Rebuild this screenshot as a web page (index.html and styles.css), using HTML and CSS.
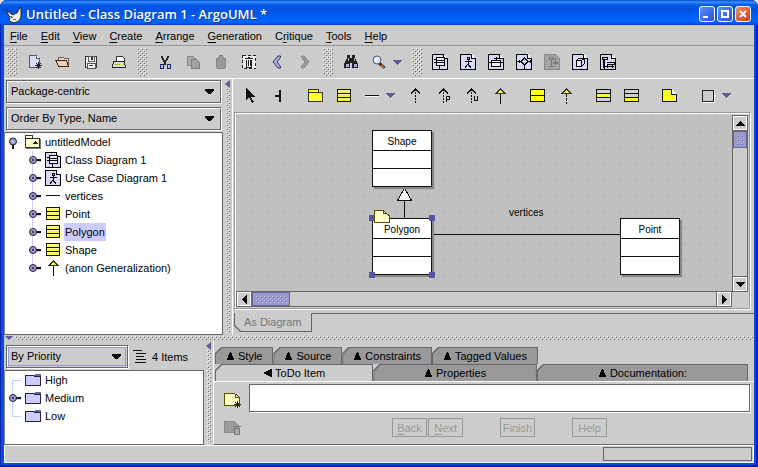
FILE: index.html
```html
<!DOCTYPE html>
<html lang="en">
<head>
<meta charset="utf-8">
<title>Untitled - Class Diagram 1 - ArgoUML *</title>
<link rel="stylesheet" href="styles.css">
</head>
<body>
<svg class="defs" aria-hidden="true">
  <symbol id="page" viewBox="0 0 16 16"><path d="M.5.5h11l4 4v11H.5z" fill="#d8d8f8" stroke="#000"/><path d="M11.500.5v4h4" fill="#fff" stroke="#000"/></symbol>
  <symbol id="class-diagram" viewBox="0 0 16 16"><use href="#page"/><path d="M4.500 3.500h8v8h-8z" fill="#eef"/><path d="M4.500 3.500h8v8h-8zM4.500 6.500h8M4.500 8.500h8M2 5.500h3M2 8.500h3M7.500 11.500v3" fill="none" stroke="#000"/></symbol>
  <symbol id="usecase-diagram" viewBox="0 0 16 16"><use href="#page"/><path d="M7 3.500h2v2H7zM8 5v5M4.500 7.500h7M8 10l-3 4M8 10l3 4" fill="none" stroke="#000"/></symbol>
  <symbol id="state-diagram" viewBox="0 0 16 16"><use href="#page"/><path d="M3.500 6.500h9v6h-9z" fill="#eef"/><path d="M3.500 6.500h9v6h-9zM3 8.500h9M8.500 6V2.500M6 4.500h5M1 8.500h3M12 8.500h3" fill="none" stroke="#000"/></symbol>
  <symbol id="activity-diagram" viewBox="0 0 16 16"><use href="#page"/><path d="M8.500 4l3.500 3.500L8.500 11 5 7.500zM1 7.500h4M12 7.500h4M8.500 11v4M3 6v3M14 6v3" fill="none" stroke="#000"/></symbol>
  <symbol id="sequence-diagram" viewBox="0 0 16 16"><path d="M.5.5h11l4 4v11H.5z" fill="#a4a4a4" stroke="#888"/><path d="M5.500 3.500h4v2h-4zM7.500 6v6M5 12.500h5M11.500 4v6M9.500 8l2 2 2-2M9 9.500h5" fill="none" stroke="#777"/></symbol>
  <symbol id="deploy-diagram" viewBox="0 0 16 16"><use href="#page"/><path d="M4.500 6.500h5v6h-5zM4.500 6.500l2-2h6l-3 2M12.500 4.500v5l-3 3" fill="#e8e8ff" stroke="#000"/></symbol>
  <symbol id="collab-diagram" viewBox="0 0 16 16"><use href="#page"/><path d="M2.500 3.500h5v2h-5zM4.500 6v8.500M3.500 6v8M6.500 8.500h8v2h-8M7.500 10v4M12.500 10v4M5 12.500h9" fill="none" stroke="#000"/></symbol>
  <symbol id="new" viewBox="0 0 16 16"><path d="M2.500 1.500h7l3 3v9h-10z" fill="#d8dcfa" stroke="#557"/><path d="M9.500 1.500v3h3" fill="#fff" stroke="#557"/><path d="M11.500 8v7M8 11.500h7M9 9l5 5M14 9l-5 5" stroke="#222"/></symbol>
  <symbol id="open" viewBox="0 0 16 16"><path d="M3.500 12.500v-9h5l1 1h4v8z" fill="#eed8c8" stroke="#7a5548"/><path d="M1 6.500h10.500l2 6H3.500z" fill="#f0cdb8" stroke="#402018"/></symbol>
  <symbol id="save" viewBox="0 0 16 16"><path d="M2.500 2.500h11v11h-11z" fill="#f2f2f2" stroke="#333"/><path d="M5 2h6v5H5zM4 9h8v5H4z" fill="#fff" stroke="#555"/><path d="M8 3h2v3H8zM6 11h4v1H6z" fill="#333"/></symbol>
  <symbol id="print" viewBox="0 0 16 16"><path d="M5 8l1-6h5l2 2v4" fill="#fff" stroke="#333"/><path d="M2.500 7.500h11l1 6h-13z" fill="#ddd" stroke="#222"/><path d="M3 10h10v1H3z" fill="#a8bb30"/><path d="M9 10h3v1H9z" fill="#f4ef20"/></symbol>
  <symbol id="cut" viewBox="0 0 16 16"><path d="M4 2l5 9M12 2l-5 9M5 2l4 8M11 2l-4 8" stroke="#222" fill="none"/><path d="M3 10h3v4H3zM10 10h3v4h-3z" fill="#bbf" stroke="#226"/></symbol>
  <symbol id="copy" viewBox="0 0 16 16"><path d="M2.500 2.500h6l2 2v7h-8z" fill="#aaa" stroke="#888"/><path d="M6.500 5.500h5l3 3v6h-8z" fill="#a2a2a2" stroke="#808080"/></symbol>
  <symbol id="paste" viewBox="0 0 16 16"><path d="M3.500 4.500h2l1-3h3l1 3h2v9l-1 1h-7l-1-1z" fill="#999" stroke="#858585"/></symbol>
  <symbol id="remove" viewBox="0 0 16 16"><path d="M1.500 1.500h13v13h-13z" fill="#eee" stroke="#222" stroke-dasharray="3 2"/><path d="M4 4.500h8M5.500 6v7h5V6M7 3.500h2M7.500 6v6M9.500 6v6" fill="none" stroke="#222"/></symbol>
  <symbol id="back" viewBox="0 0 16 16"><path class="smooth" d="M9 2h2.500v1.500L8 8l3.500 4.500V14H9L4 8z" fill="#aaaee0" stroke="#33335c"/></symbol>
  <symbol id="forward" viewBox="0 0 16 16"><path class="smooth" d="M4.500 2H7l5 6-5 6H4.500v-1.500L8 8 4.500 3.500z" fill="#999" stroke="#8c8c8c"/></symbol>
  <symbol id="find" viewBox="0 0 16 16"><path d="M4 1h3v3h2V1h3v3l3 6v4H9V9H7v5H1v-4l3-6z" fill="#222"/><path d="M3 10h3v3H3zM11 10h3v3h-3z" fill="#aab0e8"/><path d="M5 4v3M11 4v3" stroke="#aaa"/></symbol>
  <symbol id="zoom" viewBox="0 0 16 16"><path class="smooth" d="M8 9l5.500 5" stroke="#222" stroke-width="3"/><path class="smooth" d="M10 11l3 3" stroke="#c07828" stroke-width="2"/><circle cx="6" cy="6" r="4" fill="#dfe6ff" stroke="#55557c"/><path d="M4 6l2-2" stroke="#fff"/></symbol>
  <symbol id="drop" viewBox="0 0 9 5"><path d="M0 0h9L5 4.500H4z" fill="#5c5c99"/></symbol>
  <symbol id="model" viewBox="0 0 16 16"><path d="M.5 4.500v-3h7v3h7v9H.5z" fill="#ffc" stroke="#333"/><path d="M.5 4.500h8M8 9.500h5M9 8.500h3M10.500 7v2" fill="none" stroke="#222"/><path d="M1 14.500h14.500V5" fill="none" stroke="#777"/></symbol>
  <symbol id="class" viewBox="0 0 16 16"><path d="M1 2h14v12H1z" fill="#ff3"/><path d="M1.500 1.500h13v12h-13zM1 5.500h13M1 9.500h13" fill="none" stroke="#111"/><path d="M2 2.500h12M2 6.500h12M2 10.500h12" stroke="#fff8a0"/></symbol>
  <symbol id="assoc" viewBox="0 0 16 16"><path d="M1 8.500h14" stroke="#fff"/><path d="M1 7.500h14" stroke="#111"/></symbol>
  <symbol id="general" viewBox="0 0 16 16"><path d="M8.500 6v10" stroke="#111"/><path d="M4 5.500L8.500 1 13 5.500z" fill="#ff3" stroke="#332"/></symbol>
  <symbol id="realize" viewBox="0 0 16 16"><path d="M8.500 6v10" stroke="#111" stroke-dasharray="3 1"/><path d="M4 5.500L8.500 1 13 5.500z" fill="#ff3" stroke="#332"/></symbol>
  <symbol id="depend" viewBox="0 0 16 16"><path d="M7.500 1v15" stroke="#111" stroke-dasharray="2 1"/><path d="M3 5.500L7.500 1 12 5.500" fill="none" stroke="#111"/></symbol>
  <symbol id="permit" viewBox="0 0 16 16"><use href="#depend"/><path d="M10.500 14V8.500h3v3h-3" fill="none" stroke="#111"/></symbol>
  <symbol id="usage" viewBox="0 0 16 16"><use href="#depend"/><path d="M10.500 8v4.500h3V8" fill="none" stroke="#111"/></symbol>
  <symbol id="pointer" viewBox="0 0 16 16"><path d="M4 0v12l3-3 3 6 2-1-3-5h4z" fill="#111"/></symbol>
  <symbol id="broom" viewBox="0 0 16 16"><path d="M9 2h2v12H9zM5 7h5v2H5z" fill="#111"/></symbol>
  <symbol id="package" viewBox="0 0 16 16"><path d="M.5 4.500v-3h10v3h4v9H.5z" fill="#ff3" stroke="#332"/><path d="M1 4.500h10" stroke="#332"/></symbol>
  <symbol id="interface" viewBox="0 0 16 16"><path d="M.5 1.500h14v12H.5zM1 7.500h13" fill="#ff2" stroke="#111"/></symbol>
  <symbol id="attribute" viewBox="0 0 16 16"><path d="M.5 1.500h14v12H.5z" fill="#d2cfd2" stroke="#111"/><path d="M1 6h13v3H1z" fill="#ff2"/><path d="M1 5.500h13M1 9.500h13" stroke="#111"/></symbol>
  <symbol id="operation" viewBox="0 0 16 16"><path d="M.5 1.500h14v12H.5z" fill="#d2cfd2" stroke="#111"/><path d="M1 10h13v3H1z" fill="#ff2"/><path d="M1 5.500h13M1 9.500h13" stroke="#111"/></symbol>
  <symbol id="note" viewBox="0 0 16 16"><path d="M.5 1.500h9l5 5v7H.5z" fill="#ff2" stroke="#111"/><path d="M9.500 1.500v5h5" fill="#fff" stroke="#111"/></symbol>
  <symbol id="rect" viewBox="0 0 16 16"><path d="M3.500 3.500h11v11h-11z" fill="none" stroke="#fff"/><path d="M2.500 2.500h11v11h-11z" fill="#ccc" stroke="#222"/></symbol>
  <symbol id="closed" viewBox="0 0 16 18"><path d="M9 10.500h7" stroke="#ccf"/><path d="M11 9h5" stroke="#111" stroke-width="2"/><circle cx="8" cy="9" r="3.500" fill="#99c" stroke="#223"/><circle cx="8" cy="9" r="1" fill="#223"/></symbol>
  <symbol id="opened" viewBox="0 0 16 18"><path d="M12 9.500h4" stroke="#ccf"/><path d="M8 11v5" stroke="#111" stroke-width="2"/><circle cx="8" cy="8.500" r="3.500" fill="#99c" stroke="#223"/><circle cx="8" cy="8.500" r="1" fill="#eef"/></symbol>
  <symbol id="branch" viewBox="0 0 16 18"><path d="M7 9.500h9" stroke="#ccf"/></symbol>
  <symbol id="folder" viewBox="0 0 16 16"><path d="M9 4l1-2h5.500v3H9z" fill="#669"/><path d="M.5 3.500h8l1 1h6v9H.5z" fill="#ccf" stroke="#223"/></symbol>
  <symbol id="todo-new" viewBox="0 0 18 16"><path d="M.5 1.500h10l5 4v8H.5z" fill="#ffffc4" stroke="#550"/><path d="M11.500 2.500v3h4" fill="#fff" stroke="#550"/><path d="M13.500 9v7M10 12.500h7M11 10l5 5M16 10l-5 5" stroke="#222"/></symbol>
  <symbol id="todo-done" viewBox="0 0 18 16"><path d="M.5 1.500h10l4 4v7H.5z" fill="#9c9c9c" stroke="#8a8a8a"/><path d="M9 6.500h8M10.500 8v6h5V8z" fill="#aaa" stroke="#777"/></symbol>
  <symbol id="up" viewBox="0 0 9 9"><path d="M0 9h9L5 0H4z"/></symbol>
  <symbol id="left" viewBox="0 0 9 9"><path d="M9 0v9L0 5V4z"/></symbol>
</svg>

<div class="window">
  <header class="titlebar">
    <svg class="app-icon" viewBox="0 0 18 18" aria-hidden="true"><path class="smooth" d="M1 4l4 3 3 2 3-2 5-6v10l-2 4-5 2-5-2 1-3z" fill="#f4f4e8" stroke="#222"/><path d="M5 10l3 2M11 8l3-3M8 13h3" stroke="#666"/></svg>
    <h1>Untitled - Class Diagram 1 - ArgoUML *</h1>
    <button class="win-btn" aria-label="Minimize"><svg viewBox="0 0 14 14"><path d="M3 9h5v2H3z" fill="#fff"/></svg></button>
    <button class="win-btn" aria-label="Maximize"><svg viewBox="0 0 14 14"><path d="M4 4h6v6H4z" fill="none" stroke="#fff" stroke-width="2"/></svg></button>
    <button class="win-btn close" aria-label="Close"><svg viewBox="0 0 14 14"><path class="smooth" d="M4 4l6 6M10 4l-6 6" stroke="#fff" stroke-width="2"/></svg></button>
  </header>

  <nav class="menubar">
    <button><u>F</u>ile</button><button><u>E</u>dit</button><button><u>V</u>iew</button><button><u>C</u>reate</button><button><u>A</u>rrange</button><button><u>G</u>eneration</button><button>C<u>r</u>itique</button><button><u>T</u>ools</button><button><u>H</u>elp</button>
  </nav>

  <div class="toolbar">
    <div class="group"><i class="grip"></i>
      <button class="tool" aria-label="New"><svg><use href="#new"/></svg></button>
      <button class="tool" aria-label="Open"><svg><use href="#open"/></svg></button>
      <button class="tool" aria-label="Save"><svg><use href="#save"/></svg></button>
      <button class="tool" aria-label="Print"><svg><use href="#print"/></svg></button>
    </div>
    <div class="group"><i class="grip"></i>
      <button class="tool" aria-label="Cut"><svg><use href="#cut"/></svg></button>
      <button class="tool" aria-label="Copy" disabled><svg><use href="#copy"/></svg></button>
      <button class="tool" aria-label="Paste" disabled><svg><use href="#paste"/></svg></button>
      <button class="tool" aria-label="Remove"><svg><use href="#remove"/></svg></button>
      <button class="tool" aria-label="Back"><svg><use href="#back"/></svg></button>
      <button class="tool" aria-label="Forward" disabled><svg><use href="#forward"/></svg></button>
    </div>
    <div class="group"><i class="grip"></i>
      <button class="tool" aria-label="Find"><svg><use href="#find"/></svg></button>
      <button class="tool" aria-label="Zoom"><svg><use href="#zoom"/></svg></button>
      <button class="drop" aria-label="Zoom levels"><svg><use href="#drop"/></svg></button>
    </div>
    <div class="group"><i class="grip"></i>
      <button class="tool" aria-label="Class diagram"><svg><use href="#class-diagram"/></svg></button>
      <button class="tool" aria-label="Use case diagram"><svg><use href="#usecase-diagram"/></svg></button>
      <button class="tool" aria-label="State diagram"><svg><use href="#state-diagram"/></svg></button>
      <button class="tool" aria-label="Activity diagram"><svg><use href="#activity-diagram"/></svg></button>
      <button class="tool" aria-label="Sequence diagram" disabled><svg><use href="#sequence-diagram"/></svg></button>
      <button class="tool" aria-label="Deployment diagram"><svg><use href="#deploy-diagram"/></svg></button>
      <button class="tool" aria-label="Collaboration diagram"><svg><use href="#collab-diagram"/></svg></button>
    </div>
  </div>

  <main class="upper">
    <section class="explorer">
      <div class="combo"><select aria-label="Perspective"><option>Package-centric</option></select><svg><use href="#drop"/></svg></div>
      <div class="combo"><select aria-label="Order"><option>Order By Type, Name</option></select><svg><use href="#drop"/></svg></div>
      <div class="tree">
        <div class="row"><svg class="knob"><use href="#opened"/></svg><svg class="ico"><use href="#model"/></svg><span>untitledModel</span></div>
        <ul class="children">
          <li class="row"><svg class="knob"><use href="#closed"/></svg><svg class="ico"><use href="#class-diagram"/></svg><span>Class Diagram 1</span></li>
          <li class="row"><svg class="knob"><use href="#closed"/></svg><svg class="ico"><use href="#usecase-diagram"/></svg><span>Use Case Diagram 1</span></li>
          <li class="row"><svg class="knob"><use href="#closed"/></svg><svg class="ico"><use href="#assoc"/></svg><span>vertices</span></li>
          <li class="row"><svg class="knob"><use href="#closed"/></svg><svg class="ico"><use href="#class"/></svg><span>Point</span></li>
          <li class="row"><svg class="knob"><use href="#closed"/></svg><svg class="ico"><use href="#class"/></svg><span class="selected">Polygon</span></li>
          <li class="row"><svg class="knob"><use href="#closed"/></svg><svg class="ico"><use href="#class"/></svg><span>Shape</span></li>
          <li class="row"><svg class="knob"><use href="#closed"/></svg><svg class="ico"><use href="#general"/></svg><span>(anon Generalization)</span></li>
        </ul>
      </div>
    </section>
    <div class="splitter vertical"></div>
    <section class="editor">
      <div class="palette">
        <button class="tool" aria-label="Select"><svg><use href="#pointer"/></svg></button>
        <button class="tool" aria-label="Broom"><svg><use href="#broom"/></svg></button>
        <button class="tool apart" aria-label="Package"><svg><use href="#package"/></svg></button>
        <button class="tool" aria-label="Class"><svg><use href="#class"/></svg></button>
        <button class="tool" aria-label="Association"><svg><use href="#assoc"/></svg></button>
        <button class="drop" aria-label="Associations"><svg><use href="#drop"/></svg></button>
        <button class="tool" aria-label="Dependency"><svg><use href="#depend"/></svg></button>
        <button class="tool" aria-label="Permission"><svg><use href="#permit"/></svg></button>
        <button class="tool" aria-label="Usage"><svg><use href="#usage"/></svg></button>
        <button class="tool" aria-label="Generalization"><svg><use href="#general"/></svg></button>
        <button class="tool apart" aria-label="Interface"><svg><use href="#interface"/></svg></button>
        <button class="tool" aria-label="Realization"><svg><use href="#realize"/></svg></button>
        <button class="tool apart" aria-label="Attribute"><svg><use href="#attribute"/></svg></button>
        <button class="tool" aria-label="Operation"><svg><use href="#operation"/></svg></button>
        <button class="tool apart" aria-label="Note"><svg><use href="#note"/></svg></button>
        <button class="tool apart" aria-label="Rectangle"><svg><use href="#rect"/></svg></button>
        <button class="drop" aria-label="Shapes"><svg><use href="#drop"/></svg></button>
      </div>
      <div class="scrollpane">
        <div class="canvas">
          <svg class="edges" aria-hidden="true"><path d="M168.500 85v18M195 119.500h190" stroke="#111"/><path d="M161.500 85.500h14L168.500 73z" fill="#fff" stroke="#111"/></svg>
          <div class="node shape"><b>Shape</b><i></i><i></i></div>
          <div class="node polygon"><b>Polygon</b><i></i><i></i><s></s><s></s><s></s><s></s><svg class="clip" viewBox="0 0 17 13"><path d="M1 .5h9l6 5v7H1z" fill="#ffffd0" stroke="#550"/><path d="M10 .5v3h4" fill="none" stroke="#550"/></svg></div>
          <div class="node point"><b>Point</b><i></i><i></i></div>
          <span class="edge-label">vertices</span>
        </div>
        <div class="scroll v"><button aria-label="Scroll up"><svg viewBox="0 0 9 5"><path d="M0 5h9L5 0H4z"/></svg></button><i class="thumb"></i><button aria-label="Scroll down"><svg viewBox="0 0 9 5"><path d="M0 0h9L5 5H4z"/></svg></button></div>
        <div class="scroll h"><button aria-label="Scroll left"><svg viewBox="0 0 5 9"><path d="M5 0v9L0 5V4z"/></svg></button><i class="thumb"></i><button aria-label="Scroll right"><svg viewBox="0 0 5 9"><path d="M0 0v9l5-4V4z"/></svg></button></div>
      </div>
      <div class="foot"><button class="foot-tab" disabled>As Diagram</button></div>
    </section>
  </main>

  <div class="splitter horizontal"></div>

  <section class="lower">
    <div class="todo">
      <div class="todo-head">
        <div class="combo focus"><select aria-label="Group by"><option>By Priority</option></select><svg><use href="#drop"/></svg></div>
        <svg class="flat" viewBox="0 0 13 13" aria-hidden="true"><path d="M0 .5h9M3 3.500h10M3 6.500h8M3 9.500h10M2 12.500h11" stroke="#111"/></svg>
        <span>4 Items</span>
      </div>
      <ul class="tree priorities">
        <li class="row"><svg class="knob"><use href="#branch"/></svg><svg class="ico"><use href="#folder"/></svg><span>High</span></li>
        <li class="row"><svg class="knob"><use href="#closed"/></svg><svg class="ico"><use href="#folder"/></svg><span>Medium</span></li>
        <li class="row"><svg class="knob"><use href="#branch"/></svg><svg class="ico"><use href="#folder"/></svg><span>Low</span></li>
      </ul>
    </div>
    <div class="splitter vertical"></div>
    <div class="details">
      <div class="tabs back"><button><svg><use href="#up"/></svg>Style</button><button><svg><use href="#up"/></svg>Source</button><button><svg><use href="#up"/></svg>Constraints</button><button><svg><use href="#up"/></svg>Tagged Values</button></div>
      <div class="tabs front"><button class="active"><svg><use href="#left"/></svg>ToDo Item</button><button><svg><use href="#up"/></svg>Properties</button><button><svg><use href="#up"/></svg>Documentation:</button></div>
      <div class="wizard">
        <div class="side">
          <button aria-label="New to do item"><svg><use href="#todo-new"/></svg></button>
          <button aria-label="Resolve item" disabled><svg><use href="#todo-done"/></svg></button>
        </div>
        <div class="step">
          <textarea aria-label="To do description"></textarea>
          <div class="actions"><button disabled><u>B</u>ack</button><button disabled><u>N</u>ext</button><button class="apart" disabled>Finish</button><button class="apart" disabled>Help</button></div>
        </div>
      </div>
    </div>
  </section>

  <footer class="status"><div class="progress"></div></footer>
</div>
</body>
</html>
```
FILE: styles.css
```css
* { box-sizing: border-box; }

:root {
  --face: #cccccc;
  --edge: #666666;
  --shade: #999999;
  --lilac: #ccccff;
  --violet: #9999cc;
  --bumps:
    conic-gradient(at 1px 1px, transparent 270deg, #fff 0) 0 0 / 4px 4px,
    conic-gradient(at 1px 1px, transparent 270deg, #fff 0) 2px 2px / 4px 4px,
    conic-gradient(at 1px 1px, transparent 270deg, #666 0) 1px 1px / 4px 4px,
    conic-gradient(at 1px 1px, transparent 270deg, #666 0) 3px 3px / 4px 4px;
}

body {
  margin: 0;
  background: #e8e8e0;
  color: #000;
  font: 11px/18px "Liberation Sans", Arial, sans-serif;
}

button, select, textarea { font: inherit; color: inherit; }
button { padding: 0; border: 0; background: none; }
ul { margin: 0; padding: 0; list-style: none; }
svg { display: block; flex: none; shape-rendering: crispEdges; }
circle, .smooth { shape-rendering: geometricPrecision; }
.defs { position: absolute; width: 0; height: 0; }

.window {
  display: flex;
  flex-direction: column;
  min-height: 100vh;
  padding: 0 4px 4px;
  border-radius: 7px 7px 0 0;
  background: #0050e0;
  box-shadow: inset 1px 0 #0020b0, inset -2px 0 #0020b0, inset 0 -2px #0020b0;
}

/* Title bar */
.titlebar {
  display: flex;
  align-items: center;
  gap: 2px;
  height: 25px;
  margin: 0 -4px;
  padding: 4px 7px 0 5px;
  border-radius: 7px 7px 0 0;
  background: linear-gradient(#0048d0 0, #3c90ff 2px, #0058e8 5px, #0052e0 10px, #0064ff 20px, #0060f8 23px, #0038b8 25px);
}
.app-icon { width: 18px; height: 18px; }
.titlebar h1 {
  flex: 1;
  margin: 0 0 0 1px;
  color: #fff;
  font: 600 13px/18px "Open Sans", sans-serif;
  text-shadow: 1px 1px #0a3a9c;
  white-space: nowrap;
}
.titlebar h1, .win-btn { margin-bottom: 2px; }
.win-btn {
  width: 16px;
  height: 16px;
  border: 1px solid #fff;
  border-radius: 3px;
  background: linear-gradient(135deg, #5c8cf4, #2058dc);
}
.win-btn.close { background: linear-gradient(135deg, #f08a68, #d43c10); }

/* Menu and toolbars */
.menubar {
  display: flex;
  gap: 13px;
  height: 21px;
  padding: 1px 6px 0;
  border-bottom: 1px solid var(--shade);
  background: var(--face);
}
u { text-underline-offset: 2px; }
.toolbar {
  display: flex;
  gap: 4px;
  height: 33px;
  padding-left: 3px;
  border-bottom: 1px solid #fff;
  background: var(--face);
}
.group, .palette { display: flex; align-items: center; }
.grip {
  width: 10px;
  height: 28px;
  margin-right: 4px;
  background: var(--bumps);
}
.tool { width: 28px; padding: 6px; }
.tool svg { width: 16px; height: 16px; }
.drop { width: 16px; }
.group .drop { width: 15px; }
.drop svg { width: 9px; height: 5px; }

/* Upper half */
.upper {
  flex: 1;
  display: grid;
  grid-template-columns: 219px 9px 1fr;
  background: var(--face);
}
.explorer {
  display: flex;
  flex-direction: column;
  gap: 4px;
  padding-top: 1px;
}
.combo {
  display: grid;
  grid-template-columns: 1fr 16px;
  align-items: center;
  height: 23px;
  margin: 0 2px;
  border: 1px solid var(--edge);
  box-shadow: inset 1px 1px #fff, 1px 1px #fff;
}
.combo select {
  grid-area: 1 / 1 / 2 / 3;
  width: 100%;
  height: 21px;
  padding: 0 20px 1px 4px;
  border: 0;
  background: none;
  appearance: none;
}
.combo svg {
  grid-area: 1 / 2;
  width: 11px;
  height: 6px;
  filter: brightness(0);
  pointer-events: none;
}
.combo.focus { outline: 1px solid var(--violet); outline-offset: -3px; }

.tree {
  flex: 1;
  border: 1px solid var(--edge);
  border-left-color: #888;
  background: #fff;
}
.explorer .tree { margin-top: -2px; }
.row { display: flex; align-items: center; gap: 4px; height: 18px; }
.knob { width: 16px; height: 18px; }
.ico { width: 16px; height: 16px; }
.row span { white-space: nowrap; }
.row .selected { margin: 0 -1px; padding: 0 1px; background: var(--lilac); }
.children {
  padding-left: 20px;
  background: linear-gradient(var(--lilac), var(--lilac)) 27px 0 / 1px 118px no-repeat;
}
.priorities { background: linear-gradient(var(--lilac), var(--lilac)) 7px 9px / 1px 37px no-repeat #fff; }

.splitter { position: relative; background: var(--face); }
.splitter::before { content: ""; position: absolute; background: var(--bumps); }
.splitter::after { content: ""; position: absolute; background: #5c5c99; }
.splitter.vertical::before { inset: 9px 2px 2px 3px; }
.splitter.vertical::after { left: 2px; top: 1px; width: 5px; height: 8px; clip-path: polygon(100% 0, 100% 100%, 0 50%); }
.splitter.horizontal { height: 6px; }
.splitter.horizontal::before { inset: 1px 1px 1px 11px; }
.splitter.horizontal::after { left: 1px; top: 1px; width: 8px; height: 4px; clip-path: polygon(0 0, 100% 0, 50% 100%); }

.editor {
  display: flex;
  flex-direction: column;
  min-width: 0;
  border-left: 1px solid #fff;
}
.palette { height: 33px; padding-left: 3px; }
.apart { margin-left: 10px; }
.scrollpane {
  flex: 1;
  display: grid;
  grid-template: 1fr 16px / 1fr 16px;
  margin: 0 4px 4px 1px;
  border: 1px solid var(--shade);
  box-shadow: inset 1px 1px #fff, 1px 1px #fff;
  padding: 2px 1px 1px;
}
.canvas {
  position: relative;
  overflow: hidden;
  background:
    conic-gradient(at 2px 2px, transparent 270deg, #b2b6b2 0) 0 0 / 16px 16px,
    #c1c0c1;
}
.edges { position: absolute; inset: 0; width: 100%; height: 100%; }
.node {
  position: absolute;
  width: 60px;
  border: 1px solid #111;
  background: #fff;
  box-shadow: 2px 2px 1px #888;
  font-size: 10px;
  text-align: center;
}
.node b { display: block; height: 19px; padding-top: 2px; font-weight: normal; }
.node i { display: block; height: 18px; border-top: 1px solid #111; }
.shape { left: 136px; top: 15px; }
.polygon { left: 136px; top: 103px; }
.point { left: 384px; top: 103px; }
.node s { position: absolute; width: 6px; height: 6px; background: #5555aa; }
.node s:nth-of-type(odd) { left: -4px; }
.node s:nth-of-type(even) { right: -4px; }
.node s:nth-of-type(-n+2) { top: -4px; }
.node s:nth-of-type(n+3) { bottom: -4px; }
.clip { position: absolute; left: 0; top: -9px; width: 17px; height: 13px; }
.edge-label { position: absolute; left: 273px; top: 89px; font-size: 10px; }

.scroll { display: flex; border: 1px solid var(--edge); }
.scroll.v { flex-direction: column; border-width: 1px 1px 0; }
.scroll button {
  display: grid;
  place-items: center;
  width: 14px;
  height: 14px;
  border: 1px solid #fff;
  outline: 1px solid var(--edge);
}
.scroll.v svg { width: 9px; height: 5px; }
.scroll.h svg { width: 5px; height: 9px; }
.scroll button:last-child { margin: auto 0 0; }
.scroll.h button:last-child { margin: 0 0 0 auto; }
.thumb {
  width: 14px;
  height: 17px;
  margin-top: 1px;
  border: 1px solid #666699;
  background:
    conic-gradient(at 1px 1px, transparent 270deg, #ccf 0) 1px 1px / 4px 4px content-box,
    conic-gradient(at 1px 1px, transparent 270deg, #669 0) 2px 2px / 4px 4px content-box,
    conic-gradient(at 1px 1px, transparent 270deg, #ccf 0) 3px 3px / 4px 4px content-box,
    var(--violet);
  padding: 2px;
}
.h .thumb { width: 38px; height: 14px; margin: 0 0 0 1px; }

.foot {
  display: flex;
  height: 22px;
}
.foot::after { content: ""; flex: 1; border-top: 1px solid var(--edge); }
.foot-tab {
  position: relative;
  isolation: isolate;
  height: 19px;
  margin-left: 1px;
  padding: 0 11px 2px 10px;
  color: #777;
  background: var(--edge);
  clip-path: polygon(0 0, 100% 0, 100% 100%, 6px 100%, 0 13px);
}
.foot-tab::before {
  content: "";
  position: absolute;
  z-index: -1;
  inset: 0 1px 1px;
  background: var(--face);
  clip-path: polygon(0 0, 100% 0, 100% 100%, 6px 100%, 0 12px);
}

/* Lower half */
.lower {
  display: grid;
  grid-template-columns: 200px 9px 1fr;
  height: 104px;
  background: var(--face);
}
.todo { display: flex; flex-direction: column; gap: 2px; padding-top: 4px; }
.todo-head { display: flex; align-items: center; gap: 5px; }
.todo-head .combo { width: 122px; margin-right: 0; }
.todo-head span { margin-left: 1px; }
.flat { width: 13px; height: 13px; }

.details { border-left: 1px solid #fff; border-bottom: 1px solid var(--edge); }
.tabs { display: flex; padding-left: 1px; }
.tabs.back { padding-top: 6px; }
.tabs.front {
  display: grid;
  grid-template-columns: 30fr 31fr 40fr;
  margin-right: 6px;
}
.tabs button {
  position: relative;
  isolation: isolate;
  display: flex;
  align-items: center;
  justify-content: center;
  gap: 3px;
  height: 17px;
  padding: 0 11px;
  background: var(--edge);
  clip-path: polygon(0 6px, 6px 0, 100% 0, 100% 100%, 0 100%);
}
.tabs button::before {
  content: "";
  position: absolute;
  z-index: -1;
  inset: 1px 1px 0;
  background: var(--shade);
  clip-path: polygon(0 6px, 6px 0, 100% 0, 100% 100%, 0 100%);
}
.tabs .active::before { background: var(--face); }
.tabs svg { width: 9px; height: 8px; }
.wizard { display: flex; padding: 2px 4px 0 10px; border-top: 1px solid #fff; }
.side { display: flex; flex-direction: column; gap: 12px; width: 25px; padding-top: 8px; }
.side svg { width: 18px; height: 16px; }
.step { flex: 1; }
textarea {
  display: block;
  width: 100%;
  height: 28px;
  border: 1px solid var(--edge);
  background: #fff;
  box-shadow: 1px 1px #fff;
  resize: none;
}
.actions { display: flex; justify-content: center; gap: 1px; margin-top: 6px; }
.actions button {
  width: 35px;
  height: 19px;
  border: 1px solid var(--shade);
  color: var(--shade);
}
.actions .apart { margin-left: 36px; }

.status {
  display: flex;
  justify-content: flex-end;
  height: 18px;
  padding: 1px 1px 0 0;
  border: 1px solid #fff;
  background: var(--face);
}
.progress { width: 149px; height: 14px; border: 1px solid var(--edge); }
```
